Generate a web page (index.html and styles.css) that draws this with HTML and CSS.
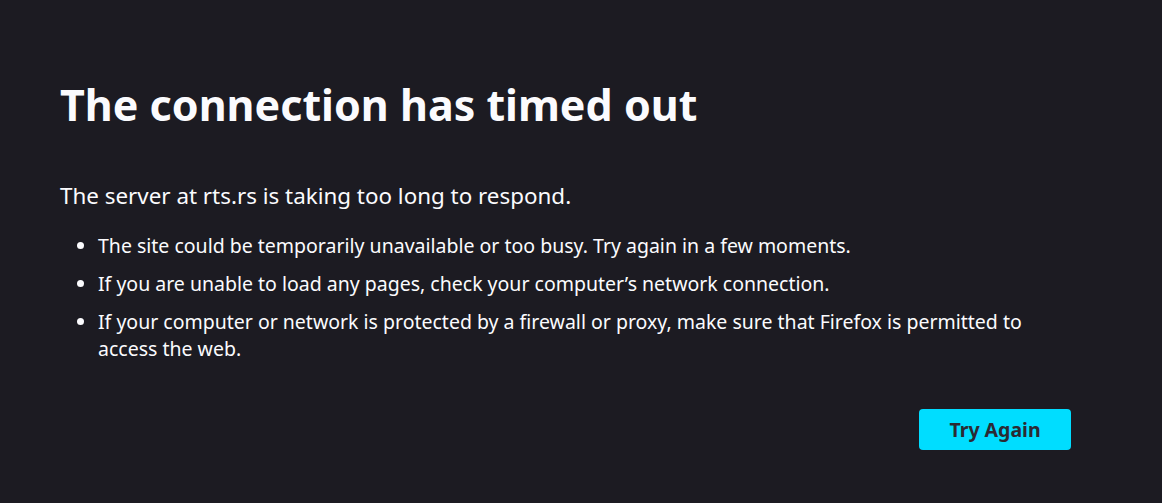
FILE: index.html
```html
<!DOCTYPE html>
<html lang="en">
<head>
  <meta charset="UTF-8">
  <title>Problem loading page</title>
  <link rel="stylesheet" href="styles.css">
</head>
<body>
  <div class="container">
    <h1 class="title">The connection has timed out</h1>

    <p class="short-desc">The server at rts.rs is taking too long to respond.</p>

    <ul class="long-desc">
      <li>The site could be temporarily unavailable or too busy. Try again in a few moments.</li>
      <li>If you are unable to load any pages, check your computer’s network connection.</li>
      <li>If your computer or network is protected by a firewall or proxy, make sure that Firefox is permitted to access the web.</li>
    </ul>

    <div class="button-row">
      <button class="primary" type="button">Try Again</button>
    </div>
  </div>
</body>
</html>
```

FILE: styles.css
```css
html, body {
  margin: 0;
  height: 100%;
}
body {
  background: #1c1b22;
  color: #fbfbfe;
  font-family: "Noto Sans", sans-serif;
  font-size: 19.5px;
  line-height: 27px;
}
.container {
  width: 1011px;
  padding: 79px 0 0 60px;
}
.title {
  font-size: 43px;
  font-weight: 700;
  line-height: 52px;
  margin: 0 0 50px;
}
.short-desc {
  font-size: 22.4px;
  line-height: 30px;
  margin: 0 0 21px;
}
.long-desc {
  margin: 0;
  padding-left: 38px;
}
.long-desc li {
  margin-bottom: 11px;
}
.button-row {
  display: flex;
  justify-content: flex-end;
  margin-top: 47px;
}
button.primary {
  width: 152px;
  height: 41px;
  border: none;
  border-radius: 4px;
  background: #00ddff;
  color: #2b2a33;
  font-family: "Noto Sans", sans-serif;
  font-size: 19.5px;
  font-weight: 700;
  cursor: pointer;
}
```
